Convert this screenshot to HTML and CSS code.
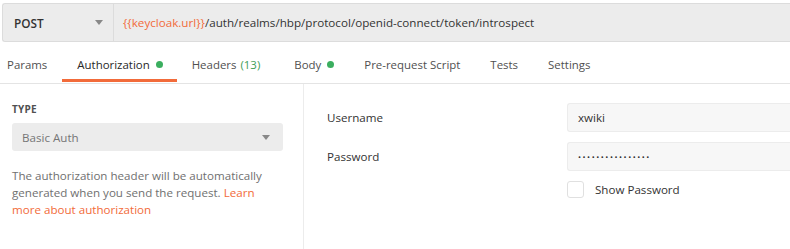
FILE: index.html
```html
<!DOCTYPE html>
<html>
<head>
<meta charset="utf-8">
<link rel="stylesheet" href="styles.css">
</head>
<body>
<div class="urlbar">
  <div class="method">
    <span>POST</span>
    <span class="caret"></span>
  </div>
  <div class="url"><span class="var">{{keycloak.url}}</span>/auth/realms/hbp/protocol/openid-connect/token/introspect</div>
</div>
<div class="tabs">
  <div class="tab first">Params</div>
  <div class="tab active">Authorization <span class="dot"></span></div>
  <div class="tab headers">Headers <span class="count">(13)</span></div>
  <div class="tab">Body <span class="dot"></span></div>
  <div class="tab">Pre-request Script</div>
  <div class="tab">Tests</div>
  <div class="tab">Settings</div>
</div>
<div class="content">
  <div class="left">
    <div class="label">TYPE</div>
    <div class="select">
      <span>Basic Auth</span>
      <span class="caret"></span>
    </div>
    <p class="desc">The authorization header will be automatically generated when you send the request. <a class="link">Learn more about authorization</a></p>
  </div>
  <div class="right">
    <div class="row">
      <div class="fname">Username</div>
      <div class="input">xwiki</div>
    </div>
    <div class="row">
      <div class="fname">Password</div>
      <div class="input pw">••••••••••••••••</div>
    </div>
    <div class="row check">
      <div class="fname"></div>
      <div class="cbwrap"><span class="cb"></span><span>Show Password</span></div>
    </div>
  </div>
</div>
</body>
</html>
```
FILE: styles.css
```css
* { box-sizing: border-box; }
html, body { margin: 0; padding: 0; background: #fff; }
body {
  font-family: "Open Sans", "Noto Sans", sans-serif;
  font-size: 11.6px;
  color: #505050;
  width: 790px;
  height: 249px;
  overflow: hidden;
}
.urlbar {
  display: flex;
  margin: 3px 0 0 2px;
  height: 39px;
  background: #ececec;
  border: 1px solid #dcdcdc;
  border-right: none;
  border-radius: 3px 0 0 3px;
}
.method {
  width: 111px;
  display: flex;
  align-items: center;
  justify-content: space-between;
  padding: 0 10px 0 11px;
  border-right: 1px solid #dcdcdc;
  font-weight: 600;
  color: #333;
  font-size: 11.8px;
}
.caret {
  width: 0; height: 0;
  border-left: 4px solid transparent;
  border-right: 4px solid transparent;
  border-top: 5px solid #888;
}
.url {
  display: flex;
  align-items: center;
  padding-left: 9px;
  color: #333;
  font-size: 11.65px;
  white-space: nowrap;
}
.var { color: #f26b3a; }
.tabs {
  display: flex;
  height: 42px;
  border-bottom: 1px solid #e4e4e4;
}
.tab {
  display: flex;
  align-items: center;
  padding: 8px 15px 0;
  color: #505050;
  font-size: 11.45px;
  white-space: nowrap;
  border-bottom: 3px solid transparent;
  margin-bottom: 1px;
}
.tab.first { padding-left: 7px; }
.tab.headers { padding-right: 19px; }
.tab.active {
  color: #282828;
  border-bottom-color: #f26b3a;
  padding-right: 14px;
}
.dot {
  display: inline-block;
  width: 7px; height: 7px;
  border-radius: 50%;
  background: #3bae5f;
  margin-left: 6px;
}
.count { color: #3f9e58; margin-left: 4px; }
.content {
  display: flex;
  height: 166px;
}
.left {
  width: 304px;
  border-right: 1px solid #ececec;
  padding: 18px 20px 0 12px;
}
.label {
  font-size: 10px;
  font-weight: 700;
  color: #505050;
  letter-spacing: 0.2px;
  height: 16px;
}
.select {
  margin-top: 5px;
  height: 28px;
  background: #ececec;
  border-radius: 3px;
  display: flex;
  align-items: center;
  justify-content: space-between;
  padding: 0 13px 0 10px;
  color: #767676;
}
.desc {
  margin: 16px 0 0;
  line-height: 17px;
  color: #707070;
}
.link { color: #f26b3a; text-decoration: none; }
.right {
  flex: 1;
  padding: 19px 0 0 23px;
}
.row {
  display: flex;
  align-items: center;
  margin-bottom: 10px;
}
.fname {
  width: 240px;
  color: #333;
}
.input {
  flex: 1;
  height: 29px;
  background: #f7f7f7;
  border: 1px solid #ececec;
  border-right: none;
  border-radius: 3px 0 0 3px;
  display: flex;
  align-items: center;
  padding-left: 10px;
  color: #333;
}
.input.pw { font-size: 8px; letter-spacing: 1.55px; }
.row.check { margin-top: 0; }
.cbwrap {
  display: flex;
  align-items: center;
  color: #333;
}
.cb {
  width: 17px; height: 17px;
  border: 1px solid #e0e0e0;
  border-radius: 3px;
  background: #fff;
  margin-right: 11px;
}
```
